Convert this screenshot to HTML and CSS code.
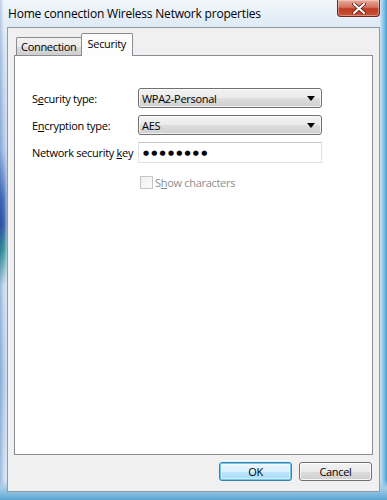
FILE: index.html
```html
<!DOCTYPE html>
<html lang="en">
<head>
  <meta charset="UTF-8" />
  <title>Home connection Wireless Network properties</title>
  <link rel="stylesheet" href="styles.css">
</head>
<body>
  <div class="window">
    <div class="titlebar">
      <span class="title">Home connection Wireless Network properties</span>
      <button type="button" class="close-button" aria-label="Close">
        <svg width="14" height="11" viewBox="0 0 14 11">
          <path d="M2 1 L12 10 M12 1 L2 10" stroke="#5a1a14" stroke-width="3.6" stroke-linecap="round"/>
          <path d="M2 1 L12 10 M12 1 L2 10" stroke="#ffffff" stroke-width="2" stroke-linecap="round"/>
        </svg>
      </button>
    </div>

    <div class="client">
      <div class="tabs">
        <div class="tab">Connection</div>
        <div class="tab active">Security</div>
      </div>

      <div class="panel">
        <div class="form-row">
          <label class="field-label" for="securityType">S<u>e</u>curity type:</label>
          <div class="combo" id="securityType">
            <span class="combo-text">WPA2-Personal</span>
            <span class="combo-arrow"></span>
          </div>
        </div>

        <div class="form-row">
          <label class="field-label" for="encryptionType">E<u>n</u>cryption type:</label>
          <div class="combo" id="encryptionType">
            <span class="combo-text">AES</span>
            <span class="combo-arrow"></span>
          </div>
        </div>

        <div class="form-row">
          <label class="field-label" for="securityKey">Network security <u>k</u>ey</label>
          <div class="textbox" id="securityKey">●●●●●●●●</div>
        </div>

        <div class="check-row">
          <span class="checkbox"></span>
          <span class="check-label">S<u>h</u>ow characters</span>
        </div>
      </div>

      <div class="button-row">
        <button type="button" class="dialog-button default-button">OK</button>
        <button type="button" class="dialog-button">Cancel</button>
      </div>
    </div>
  </div>
</body>
</html>
```

FILE: styles.css
```css
:root {
  --font: "Open Sans", "Noto Sans", "Liberation Sans", sans-serif;
  --client-bg: #f0f0f0;
  --panel-border: #898c95;
  --text: #000;
}

html, body {
  margin: 0;
  padding: 0;
}

body {
  width: 387px;
  height: 500px;
  overflow: hidden;
  font-family: var(--font);
  font-size: 11px;
  letter-spacing: -0.3px;
  color: var(--text);
}

.window {
  width: 387px;
  height: 500px;
  box-sizing: border-box;
  padding: 0 7px 8px 7px;
  display: flex;
  flex-direction: column;
  background:
    linear-gradient(180deg, rgba(255,255,255,0) 0, rgba(255,255,255,0) 480px, #a6cde6 488px, #5aa6d4 500px),
    linear-gradient(90deg, rgba(40,80,170,0.25) 0, rgba(255,255,255,0.1) 4px, rgba(230,240,250,0.6) 7px, transparent 7px, transparent 380px, #cfe6f4 380px, #7fc0e6 384px, #4a9cd1 387px),
    linear-gradient(180deg, #f2f7fb 0, #e3edf7 20px, #c9dcee 60px, #a9c2e6 150px, #3a64b4 200px, #2a4f9f 225px, #2c9090 250px, #c4d9ef 285px, #aac6e6 380px, #cfe2f2 500px);
}

.titlebar {
  height: 27px;
  display: flex;
  align-items: flex-start;
  justify-content: space-between;
}

.title {
  font-size: 12px;
  letter-spacing: -0.2px;
  line-height: 14px;
  margin-top: 7px;
  margin-left: 1px;
  white-space: nowrap;
}

.close-button {
  width: 43px;
  height: 17px;
  padding: 0;
  border: 1px solid #6e2a22;
  border-top: none;
  border-radius: 0 0 4px 4px;
  background: linear-gradient(180deg, #e9a99a 0, #d47260 45%, #bd3c22 55%, #c9533a 100%);
  display: flex;
  align-items: center;
  justify-content: center;
  box-shadow: inset 0 0 0 1px rgba(255,255,255,0.35);
}

.client {
  flex: 1;
  background: var(--client-bg);
  border: 1px solid #8e9aa6;
  padding: 5px 6px 10px 6px;
  display: flex;
  flex-direction: column;
}

.tabs {
  display: flex;
  align-items: flex-end;
  height: 22px;
  padding-left: 2px;
  position: relative;
  z-index: 1;
}

.tab {
  height: 18px;
  box-sizing: border-box;
  padding: 0 4px;
  border: 1px solid var(--panel-border);
  border-bottom: none;
  border-right: none;
  background: linear-gradient(180deg, #f2f2f2 0, #ebebeb 50%, #dcdcdc 51%, #cfcfcf 100%);
  display: flex;
  align-items: center;
  line-height: 1;
  border-radius: 2px 0 0 0;
}

.tab.active {
  height: 23px;
  margin-bottom: -1px;
  padding: 0 6px 4px 6px;
  background: #fcfcfc;
  border-right: 1px solid var(--panel-border);
  border-radius: 2px 2px 0 0;
}

.panel {
  flex: 1;
  background: #fff;
  border: 1px solid var(--panel-border);
  padding: 32px 17px 0 17px;
}

.form-row {
  display: flex;
  align-items: center;
  margin-bottom: 7px;
}

.field-label {
  width: 106px;
  white-space: nowrap;
}

.combo {
  width: 184px;
  height: 20px;
  box-sizing: border-box;
  border: 1px solid #707070;
  border-radius: 3px;
  background: linear-gradient(180deg, #f2f2f2 0, #ebebeb 50%, #dddddd 51%, #cfcfcf 100%);
  display: flex;
  align-items: center;
  justify-content: space-between;
  padding: 0 6px 0 3px;
  box-shadow: inset 0 0 0 1px rgba(255,255,255,0.7);
}

.combo-arrow {
  width: 0;
  height: 0;
  border-left: 4px solid transparent;
  border-right: 4px solid transparent;
  border-top: 5px solid #000;
}

.textbox {
  width: 184px;
  height: 21px;
  box-sizing: border-box;
  border: 1px solid #dde2e8;
  border-top-color: #c2c8ce;
  background: #fff;
  font-family: "DejaVu Sans", sans-serif;
  font-size: 7px;
  letter-spacing: 2.2px;
  display: flex;
  align-items: center;
  padding-left: 4px;
}

.check-row {
  display: flex;
  align-items: center;
  margin-top: 12px;
  margin-left: 108px;
}

.checkbox {
  width: 13px;
  height: 13px;
  box-sizing: border-box;
  border: 1px solid #c5c5c5;
  background: linear-gradient(135deg, #f0f0f0 0, #fbfbfb 100%);
  margin-right: 2px;
}

.check-label {
  color: #8d8d8d;
}

.button-row {
  display: flex;
  justify-content: flex-end;
  gap: 7px;
  margin-top: 7px;
  padding-right: 1px;
}

.dialog-button {
  width: 73px;
  height: 19px;
  padding: 0;
  font-family: var(--font);
  font-size: 11px;
  letter-spacing: -0.3px;
  color: #000;
  border: 1px solid #707070;
  border-radius: 3px;
  background: linear-gradient(180deg, #f2f2f2 0, #ebebeb 50%, #dddddd 51%, #cfcfcf 100%);
  box-shadow: inset 0 0 0 1px rgba(255,255,255,0.8);
}

.default-button {
  border-color: #3c7fb1;
  box-shadow: inset 0 0 0 1px #6fc6ec, inset 0 0 0 2px rgba(255,255,255,0.5);
  background: linear-gradient(180deg, #eaf6fd 0, #d9f0fc 50%, #bee6fd 51%, #a7d9f5 100%);
}
```
